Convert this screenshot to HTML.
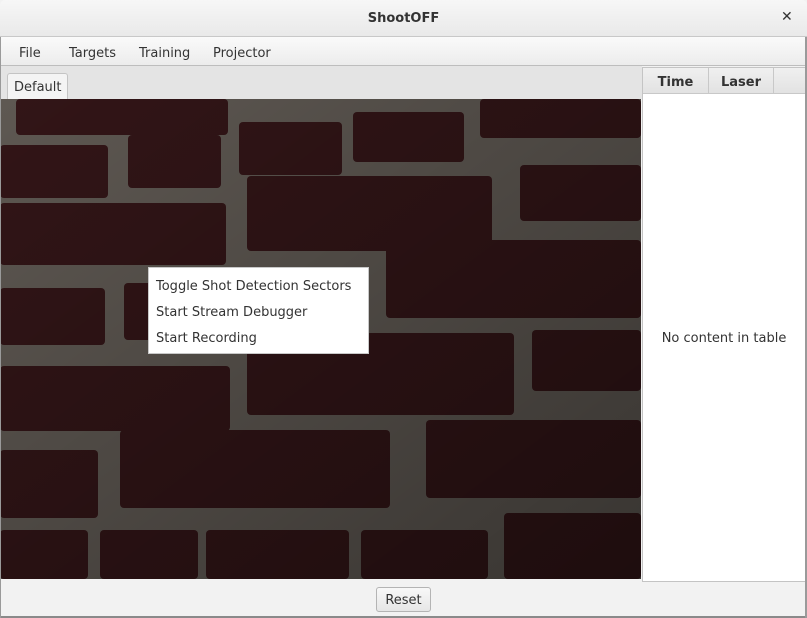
<!DOCTYPE html>
<html><head><meta charset="utf-8"><style>
*{margin:0;padding:0;box-sizing:border-box}
body{width:807px;height:618px;overflow:hidden;background:#f2f2f2;font-family:"DejaVu Sans","Liberation Sans",sans-serif;font-size:13px;color:#333;position:relative}
.abs{position:absolute}
</style></head><body>
<div class="abs" style="left:0;top:0;width:807px;height:37px;background:linear-gradient(#f7f7f7,#e9e9e9);border-bottom:1px solid #c8c8c8;border-radius:5px 5px 0 0"></div>
<div class="abs" style="left:0;top:11px;width:807px;text-align:center;font-weight:bold;font-size:13px;color:#333">ShootOFF</div>
<div class="abs" style="left:781px;top:9px;font-weight:bold;font-size:14px;color:#333">✕</div>
<div class="abs" style="left:0;top:37px;width:807px;height:29px;background:linear-gradient(#fafafa,#ececec);border-bottom:1px solid #bdbdbd"></div>
<div class="abs" style="left:19px;top:46px">File</div>
<div class="abs" style="left:69px;top:46px">Targets</div>
<div class="abs" style="left:139px;top:46px">Training</div>
<div class="abs" style="left:213px;top:46px">Projector</div>
<div class="abs" style="left:0;top:66px;width:642px;height:33px;background:#e4e4e4"></div>
<div class="abs" style="left:7px;top:73px;width:61px;height:27px;background:#f4f4f4;border:1px solid #c4c4c4;border-bottom:none;border-radius:3px 3px 0 0"></div>
<div class="abs" style="left:14px;top:80px">Default</div>
<svg class="abs" style="left:0;top:99px" width="641" height="480" viewBox="0 99 641 480">
<defs><linearGradient id="g" x1="0" x2="1" y1="0" y2="1"><stop offset="0" stop-color="#000" stop-opacity="0.0"/><stop offset="1" stop-color="#000" stop-opacity="0.4"/></linearGradient></defs>
<rect x="0" y="99" width="641" height="480" fill="#5e5852"/>
<g fill="#321517">
<rect x="16" y="99" width="212" height="36" rx="4"/><rect x="239" y="122" width="103" height="53" rx="4"/><rect x="353" y="112" width="111" height="50" rx="4"/><rect x="480" y="99" width="161" height="39" rx="4"/>
<rect x="0" y="145" width="108" height="53" rx="4"/><rect x="128" y="135" width="93" height="53" rx="4"/>
<rect x="0" y="203" width="226" height="62" rx="4"/><rect x="247" y="176" width="245" height="75" rx="4"/><rect x="520" y="165" width="121" height="56" rx="4"/>
<rect x="386" y="240" width="255" height="78" rx="4"/>
<rect x="0" y="288" width="105" height="57" rx="4"/><rect x="124" y="283" width="98" height="57" rx="4"/>
<rect x="0" y="366" width="230" height="65" rx="4"/><rect x="247" y="333" width="267" height="82" rx="4"/><rect x="532" y="330" width="109" height="61" rx="4"/>
<rect x="426" y="420" width="215" height="78" rx="4"/><rect x="0" y="450" width="98" height="68" rx="4"/><rect x="120" y="430" width="270" height="78" rx="4"/>
<rect x="0" y="530" width="88" height="49" rx="4"/><rect x="100" y="530" width="98" height="49" rx="4"/><rect x="206" y="530" width="143" height="49" rx="4"/><rect x="361" y="530" width="127" height="49" rx="4"/><rect x="504" y="513" width="137" height="66" rx="4"/>
</g>
<rect x="0" y="99" width="641" height="480" fill="url(#g)"/>
</svg>
<div class="abs" style="left:148px;top:267px;width:221px;height:87px;background:#fff;border:1px solid #c8c8c8"></div>
<div class="abs" style="left:156px;top:279px">Toggle Shot Detection Sectors</div>
<div class="abs" style="left:156px;top:305px">Start Stream Debugger</div>
<div class="abs" style="left:156px;top:331px">Start Recording</div>
<div class="abs" style="left:642px;top:67px;width:164px;height:515px;background:#fff;border:1px solid #c4c4c4"></div>
<div class="abs" style="left:643px;top:68px;width:162px;height:26px;background:linear-gradient(#f0f0f0,#e2e2e2);border-bottom:1px solid #c8c8c8"></div>
<div class="abs" style="left:708px;top:68px;width:1px;height:26px;background:#c8c8c8"></div>
<div class="abs" style="left:773px;top:68px;width:1px;height:26px;background:#c8c8c8"></div>
<div class="abs" style="left:643px;top:75px;width:65px;text-align:center;font-weight:bold">Time</div>
<div class="abs" style="left:709px;top:75px;width:64px;text-align:center;font-weight:bold">Laser</div>
<div class="abs" style="left:643px;top:331px;width:162px;text-align:center">No content in table</div>
<div class="abs" style="left:376px;top:587px;width:55px;height:25px;background:linear-gradient(#f8f8f8,#e6e6e6);border:1px solid #b4b4b4;border-radius:3px;text-align:center;line-height:25px">Reset</div>
<div class="abs" style="left:0;top:616px;width:807px;height:2px;background:#8a8a8a"></div>
<div class="abs" style="left:805px;top:37px;width:2px;height:581px;background:#9a9a9a"></div>
<div class="abs" style="left:0;top:37px;width:1px;height:581px;background:#9a9a9a"></div>
</body></html>
